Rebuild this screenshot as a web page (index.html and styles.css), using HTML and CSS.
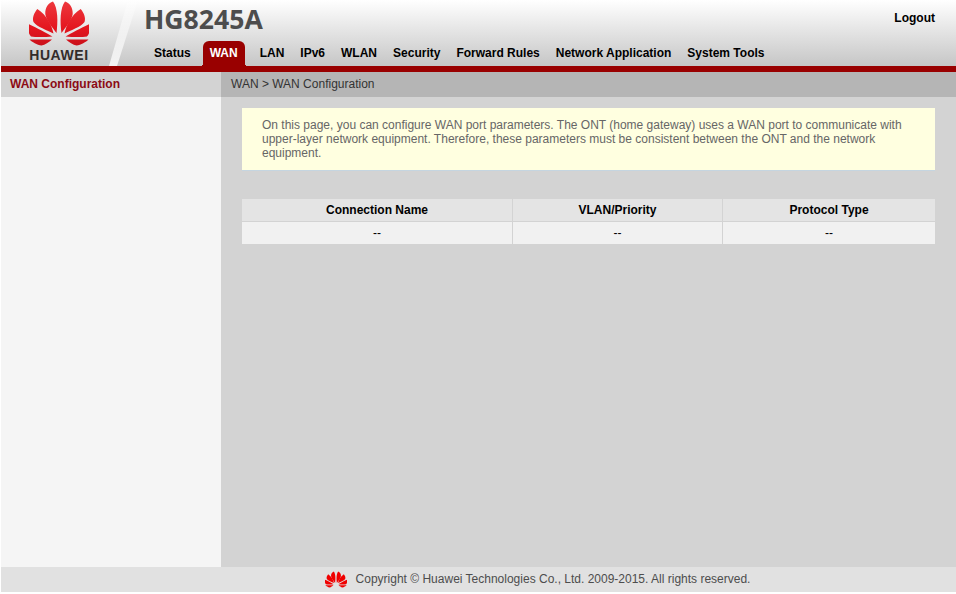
FILE: index.html
```html
<!DOCTYPE html>
<html>
<head>
	<meta charset="utf-8">
	<title>HG8245A</title>
	<link rel="stylesheet" href="styles.css">
</head>
<body>
	<svg class="defs" width="0" height="0">
		<defs>
			<linearGradient id="petalRed" gradientUnits="userSpaceOnUse" x1="0" y1="0" x2="0" y2="47">
				<stop offset="0" stop-color="#ee3a3f"/>
				<stop offset=".6" stop-color="#e4161f"/>
				<stop offset="1" stop-color="#c8101a"/>
			</linearGradient>
		</defs>
		<symbol id="petals" viewBox="0 0 60 47">
			<g id="half">
				<path d="M32.5 33C31 22 31 8 36 1.5C41 3 44 8 43.7 14C43 20 37 27 32.5 33Z"/>
				<path d="M35.5 33.5C37 26 42 15 51.7 9C55 13 57 18 55.5 22C52 27 42 30 35.5 33.5Z"/>
				<path d="M36.5 36.5C42 33.5 52 28 60 24.3C61.5 29 60.5 34 58 36.5C52 37.5 43 37 36.5 36.5Z"/>
				<path d="M37 39.5L59.5 39.5C57 42 52 45 47.5 45.5C44 45 40 42 37 39.5Z"/>
			</g>
			<use href="#half" transform="matrix(-1 0 0 1 60 0)"/>
		</symbol>
	</svg>
	<div class="page">
		<div class="header">
			<div class="slash"></div>
			<div class="logo">
				<svg class="logoMark"><use href="#petals" fill="url(#petalRed)"/></svg>
				<span class="logoText">HUAWEI</span>
			</div>
			<div class="headerRight">
				<div class="titleRow">
					<span class="title">HG8245A</span>
					<a class="logout">Logout</a>
				</div>
				<div class="nav">
					<a class="navItem">Status</a>
					<a class="navItem active">WAN</a>
					<a class="navItem">LAN</a>
					<a class="navItem">IPv6</a>
					<a class="navItem">WLAN</a>
					<a class="navItem">Security</a>
					<a class="navItem">Forward Rules</a>
					<a class="navItem">Network Application</a>
					<a class="navItem">System Tools</a>
				</div>
			</div>
		</div>
		<div class="main">
			<div class="side">
				<div class="sideItem">WAN Configuration</div>
			</div>
			<div class="content">
				<div class="crumb">WAN &gt; WAN Configuration</div>
				<div class="body">
					<div class="notice">On this page, you can configure WAN port parameters. The ONT (home gateway) uses a WAN port to communicate with upper-layer network equipment. Therefore, these parameters must be consistent between the ONT and the network equipment.</div>
					<table class="wanTable">
						<tr>
							<th class="col1">Connection Name</th>
							<th class="col2">VLAN/Priority</th>
							<th>Protocol Type</th>
						</tr>
						<tr>
							<td>--</td>
							<td>--</td>
							<td>--</td>
						</tr>
					</table>
				</div>
			</div>
		</div>
		<div class="footer">
			<svg class="footMark"><use href="#petals"/></svg>
			<span>Copyright © Huawei Technologies Co., Ltd. 2009-2015. All rights reserved.</span>
		</div>
	</div>
</body>
</html>
```

FILE: styles.css
```css
html, body {
	margin: 0;
	height: 100%;
	background-color: #fff;
}
body {
	font: 12px/14px "Liberation Sans", Arial, sans-serif;
	color: #000;
	overflow: hidden;
}
.defs {
	display: block;
}
.page {
	display: flex;
	flex-direction: column;
	height: 592px;
	margin-left: 1px;
}

/* header */
.header {
	position: relative;
	display: flex;
	flex: none;
	height: 66px;
	border-bottom: 6px solid #990000;
	background: linear-gradient(#fff, #c6c6c6);
}
.slash {
	position: absolute;
	left: 107px;
	top: 0;
	width: 31px;
	height: 66px;
	background: linear-gradient(rgba(255, 255, 255, .25), rgba(255, 255, 255, .8));
	clip-path: polygon(20px 0, 30px 0, 9px 66px, 1px 66px);
}
.logo {
	position: relative;
	display: flex;
	flex: none;
	flex-direction: column;
	align-items: center;
	width: 116px;
	margin-right: 28px;
}
.logoMark {
	width: 60px;
	height: 47px;
}
.logoText {
	margin-top: 1px;
	font-size: 14px;
	font-weight: bold;
	line-height: 14px;
	letter-spacing: .6px;
	color: #332c2b;
}
.headerRight {
	display: flex;
	flex: 1;
	flex-direction: column;
}
.titleRow {
	display: flex;
	justify-content: space-between;
	height: 41px;
	padding-right: 21px;
}
.title {
	margin: 1px 0 0 -1px;
	font: bold 26.6px/36px "Open Sans", sans-serif;
	color: #4d4d4d;
}
.logout {
	margin-top: 11px;
	font-weight: bold;
}
.nav {
	display: flex;
	height: 25px;
	padding-left: 1px;
}
.navItem {
	padding: 0 8px;
	font-weight: bold;
	line-height: 24px;
}
.navItem.active {
	position: relative;
	margin: 0 7px 0 4px;
	padding: 0 7px;
	border-radius: 6px 6px 0 0;
	background-color: #990000;
	color: #fff;
}
.navItem.active:before,
.navItem.active:after {
	content: "";
	position: absolute;
	bottom: 0;
	width: 3px;
	height: 3px;
}
.navItem.active:before {
	left: -3px;
	background: radial-gradient(circle at 0 0, transparent 3px, #990000 3px);
}
.navItem.active:after {
	right: -3px;
	background: radial-gradient(circle at 100% 0, transparent 3px, #990000 3px);
}

/* left menu */
.main {
	display: flex;
	flex: 1;
}
.side {
	flex: none;
	width: 220px;
	background-color: #f5f5f5;
}
.sideItem {
	height: 25px;
	padding-left: 9px;
	font-weight: bold;
	line-height: 24px;
	color: #8c0a14;
	background-color: #d3d3d3;
}

/* content */
.content {
	flex: 1;
	background-color: #d3d3d3;
}
.crumb {
	height: 25px;
	padding-left: 10px;
	line-height: 24px;
	color: #333;
	background-color: #b5b5b5;
}
.body {
	padding: 11px 21px 0 21px;
}
.notice {
	padding: 10px 30px 10px 20px;
	border-bottom: 1px solid #c5d5e0;
	color: #666;
	background-color: #ffffe0;
}
.wanTable {
	width: 693px;
	margin-top: 28px;
	border-spacing: 0;
	table-layout: fixed;
}
.wanTable th,
.wanTable td {
	height: 22px;
	padding: 0;
	text-align: center;
	border-right: 1px solid #d3d3d3;
}
.wanTable th:last-child,
.wanTable td:last-child {
	border-right: 0;
}
.wanTable th {
	border-bottom: 1px solid #d3d3d3;
	background-color: #e4e4e4;
}
.wanTable td {
	background-color: #f1f1f1;
}
.col1 {
	width: 270px;
}
.col2 {
	width: 209px;
}

/* footer */
.footer {
	display: flex;
	flex: none;
	align-items: center;
	justify-content: center;
	gap: 9px;
	height: 23px;
	padding: 0 0 2px 118px;
	color: #4d4d4d;
	background-color: #e1e1e1;
}
.footMark {
	width: 22px;
	height: 17px;
	margin-top: 2px;
	color: #f00000;
	fill: currentColor;
}
```
